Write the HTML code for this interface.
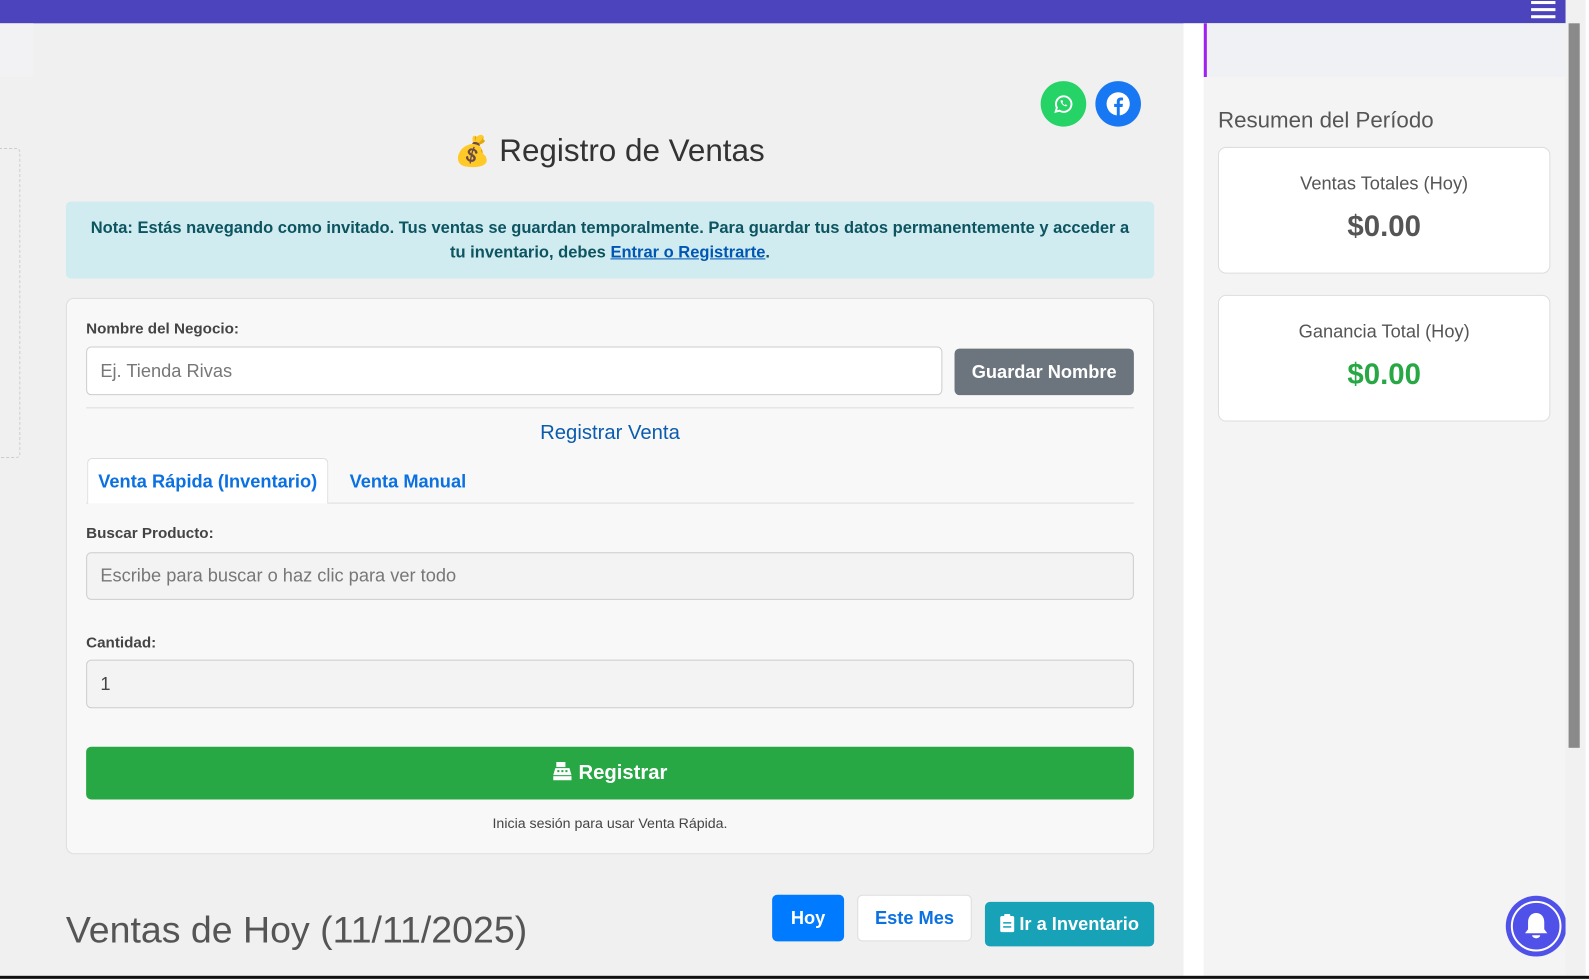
<!DOCTYPE html>
<html><head><meta charset="utf-8">
<style>
*{box-sizing:border-box;margin:0;padding:0}
html,body{width:1589px;height:980px;overflow:hidden;background:#fff}
#w{width:1568px;height:967px;transform:scale(1.0133);transform-origin:0 0;position:relative;background:#f0f0f0;font-family:"Liberation Sans",Arial,sans-serif;color:#333}
.a{position:absolute}
.c{text-align:center}
.inp{position:absolute;border:1px solid #ccc;border-radius:5px;font-size:18px;color:#777;padding-left:13px;display:flex;align-items:center}
.lbl{position:absolute;font-size:15px;font-weight:bold;color:#444}
</style></head><body><div id="w">
<div class="a" style="left:0;top:0;width:1548px;height:23px;background:#4c44bd"></div>
<div class="a" style="left:1511px;top:1px;width:24px;height:3px;background:#fff"></div>
<div class="a" style="left:1511px;top:8px;width:24px;height:3px;background:#fff"></div>
<div class="a" style="left:1511px;top:15px;width:24px;height:3px;background:#fff"></div>
<div class="a" style="left:0;top:23px;width:33px;height:53px;background:#f2f2f5"></div>
<div class="a" style="left:-5px;top:146px;width:25px;height:306px;border:1px dashed #ccc;border-radius:4px"></div>

<div class="a" style="left:1027px;top:80px;width:45px;height:45px;border-radius:50%;background:#25d366"></div>
<svg class="a" style="left:1038px;top:91px" width="23" height="23" viewBox="0 0 24 24"><path d="M4 20l1.2-4A8 8 0 1 1 8 19z" fill="none" stroke="#fff" stroke-width="2"/><path d="M9 8.5c0 3 3 6 6 6l1-1.2-1.8-.8-.8.8c-1-.4-2-1.4-2.5-2.5l.8-.8-.8-1.8z" fill="#fff"/></svg>
<div class="a" style="left:1081px;top:80px;width:45px;height:45px;border-radius:50%;background:#1877f2"></div>
<svg class="a" style="left:1091px;top:90px" width="25" height="25" viewBox="0 0 24 24"><circle cx="12" cy="12" r="11" fill="#fff"/><path d="M13.5 23V15h2.6l.4-3h-3V10.2c0-.9.3-1.5 1.6-1.5h1.5V6.1c-.3 0-1.2-.1-2.2-.1-2.2 0-3.7 1.3-3.7 3.8V12H8.2v3h2.5v8z" fill="#1877f2"/></svg>

<div class="a" style="left:448px;top:131px;font-size:31px;color:#333;white-space:nowrap"><span style="font-size:29px">💰</span> Registro de Ventas</div>

<div class="a c" style="left:65px;top:199px;width:1074px;height:76px;background:#d1ecf1;border-radius:5px;color:#0c5460;font-size:16.3px;font-weight:bold;line-height:24px;padding-top:14px">Nota: Estás navegando como invitado. Tus ventas se guardan temporalmente. Para guardar tus datos permanentemente y acceder a<br>tu inventario, debes <u style="color:#0056b3">Entrar o Registrarte</u>.</div>

<div class="a" style="left:65px;top:294px;width:1074px;height:549px;background:#f8f8f8;border:1px solid #ddd;border-radius:8px"></div>
<div class="lbl" style="left:85px;top:316px">Nombre del Negocio:</div>
<div class="inp" style="left:85px;top:342px;width:845px;height:48px;background:#fff">Ej. Tienda Rivas</div>
<div class="a c" style="left:942px;top:344px;width:177px;height:46px;background:#6c757d;border-radius:5px;color:#fff;font-weight:bold;font-size:18px;line-height:46px">Guardar Nombre</div>
<div class="a" style="left:85px;top:402px;width:1034px;height:1px;background:#ddd"></div>
<div class="a c" style="left:85px;top:416px;width:1034px;font-size:20px;color:#0b5cad">Registrar Venta</div>
<div class="a" style="left:85px;top:496px;width:1034px;height:1px;background:#ddd"></div>
<div class="a c" style="left:86px;top:452px;width:238px;height:45px;background:#fff;border:1px solid #ddd;border-bottom:none;border-radius:5px 5px 0 0;color:#0b70e0;font-weight:bold;font-size:18px;line-height:44px">Venta Rápida (Inventario)</div>
<div class="a" style="left:345px;top:465px;color:#0b70e0;font-weight:bold;font-size:18px">Venta Manual</div>
<div class="lbl" style="left:85px;top:518px">Buscar Producto:</div>
<div class="inp" style="left:85px;top:545px;width:1034px;height:47px;background:#f3f3f3">Escribe para buscar o haz clic para ver todo</div>
<div class="lbl" style="left:85px;top:626px">Cantidad:</div>
<div class="inp" style="left:85px;top:651px;width:1034px;height:48px;background:#f3f3f3;color:#444">1</div>
<div class="a c" style="left:85px;top:737px;width:1034px;height:52px;background:#28a745;border-radius:5px;color:#fff;font-weight:bold;font-size:20px;line-height:52px"><svg width="20" height="20" viewBox="0 0 20 20" style="vertical-align:-2px"><rect x="4" y="1" width="9" height="5" fill="#fff"/><path d="M3 7h14l2 7H1z" fill="#fff"/><rect x="1" y="15" width="18" height="4" fill="#fff"/><g fill="#28a745"><rect x="5" y="9" width="2" height="2"/><rect x="9" y="9" width="2" height="2"/><rect x="13" y="9" width="2" height="2"/></g></svg> Registrar</div>
<div class="a c" style="left:85px;top:804px;width:1034px;font-size:14px;color:#444">Inicia sesión para usar Venta Rápida.</div>

<div class="a" style="left:65px;top:897px;font-size:37px;color:#555;white-space:nowrap">Ventas de Hoy (11/11/2025)</div>
<div class="a c" style="left:762px;top:883px;width:71px;height:46px;background:#007bff;border-radius:5px;color:#fff;font-weight:bold;font-size:18px;line-height:46px">Hoy</div>
<div class="a c" style="left:846px;top:883px;width:113px;height:46px;background:#fff;border:1px solid #ddd;border-radius:5px;color:#0b70e0;font-weight:bold;font-size:18px;line-height:44px">Este Mes</div>
<div class="a c" style="left:972px;top:890px;width:167px;height:44px;background:#17a2b8;border-radius:5px;color:#fff;font-weight:bold;font-size:18px;line-height:44px"><svg width="14" height="18" viewBox="0 0 14 18" style="vertical-align:-2px"><rect x="0" y="2" width="14" height="16" rx="2" fill="#fff"/><rect x="4" y="0" width="6" height="4" rx="1" fill="#fff"/><g fill="#17a2b8"><rect x="3" y="8" width="8" height="1.5"/><rect x="3" y="12" width="8" height="1.5"/></g></svg> Ir a Inventario</div>

<div class="a" style="left:1168px;top:23px;width:20px;height:940px;background:#fff"></div>
<div class="a" style="left:1188px;top:23px;width:357px;height:940px;background:#f4f4f4"></div>
<div class="a" style="left:1188px;top:23px;width:357px;height:53px;background:#f0f1f4;border-left:3px solid #a020f0"></div>
<div class="a" style="left:1202px;top:106px;font-size:22px;color:#555">Resumen del Período</div>
<div class="a c" style="left:1202px;top:145px;width:328px;height:125px;background:#fff;border:1px solid #ddd;border-radius:8px">
<div style="margin-top:25px;font-size:18px;color:#555">Ventas Totales (Hoy)</div>
<div style="margin-top:16px;font-size:29px;font-weight:bold;color:#555">$0.00</div></div>
<div class="a c" style="left:1202px;top:291px;width:328px;height:125px;background:#fff;border:1px solid #ddd;border-radius:8px">
<div style="margin-top:25px;font-size:18px;color:#555">Ganancia Total (Hoy)</div>
<div style="margin-top:16px;font-size:29px;font-weight:bold;color:#28a745">$0.00</div></div>

<div class="a" style="left:1486px;top:884px;width:60px;height:60px;border-radius:50%;background:#4f51e8"></div>
<div class="a" style="left:1491px;top:889px;width:50px;height:50px;border-radius:50%;border:2px solid #fff"></div>
<svg class="a" style="left:1500px;top:898px" width="32" height="32" viewBox="0 0 32 32"><path d="M16 3c-5 0-8 4-8 9v7l-3 4h22l-3-4v-7c0-5-3-9-8-9z" fill="#fff"/><path d="M12 25a4 3 0 0 0 8 0z" fill="#fff"/></svg>

<div class="a" style="left:1545px;top:0;width:20px;height:963px;background:#f1f1f1"></div>
<div class="a" style="left:1548px;top:23px;width:11px;height:715px;background:#8a8a8a"></div>
<div class="a" style="left:1565px;top:0;width:24px;height:963px;background:#fff"></div>
<div class="a" style="left:0;top:963px;width:1589px;height:17px;background:#fff"></div>
<div class="a" style="left:0;top:963px;width:1589px;height:3px;background:#111"></div>
</div></body></html>
